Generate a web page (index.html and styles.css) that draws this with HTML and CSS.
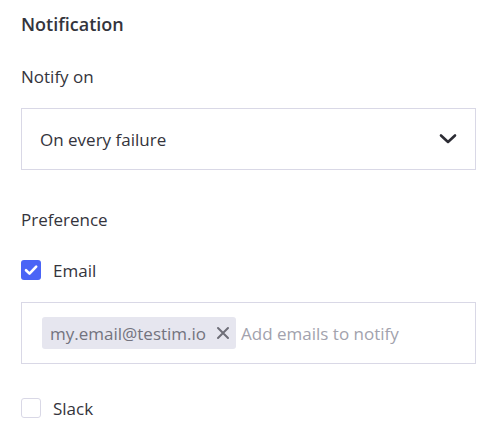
FILE: index.html
```html
<!DOCTYPE html>
<html>
<head>
<meta charset="utf-8">
<link rel="stylesheet" href="styles.css">
</head>
<body>
<div class="panel">
  <div class="title">Notification</div>
  <div class="label notify-label">Notify on</div>
  <div class="select">
    <span class="select-value">On every failure</span>
    <svg class="chevron" width="18" height="12" viewBox="0 0 18 12"><path d="M2 2.5 L9 9 L16 2.5" fill="none" stroke="#2c2c34" stroke-width="2.6" stroke-linecap="round" stroke-linejoin="round"/></svg>
  </div>
  <div class="label pref-label">Preference</div>
  <div class="check-row email-row">
    <span class="box checked">
      <svg width="20" height="20" viewBox="0 0 20 20"><path d="M5 10.2 L8.5 13.6 L15.2 6.6" fill="none" stroke="#fff" stroke-width="2.6" stroke-linecap="round" stroke-linejoin="round"/></svg>
    </span>
    <span class="check-label">Email</span>
  </div>
  <div class="emails">
    <span class="chip">my.email@testim.io
      <svg class="chip-x" width="14" height="14" viewBox="0 0 14 14"><path d="M2 2 L12 12 M12 2 L2 12" stroke="#6e6e78" stroke-width="2" stroke-linecap="round"/></svg>
    </span>
    <span class="placeholder">Add emails to notify</span>
  </div>
  <div class="check-row slack-row">
    <span class="box"></span>
    <span class="check-label">Slack</span>
  </div>
</div>
</body>
</html>
```
FILE: styles.css
```css
html, body {
  margin: 0;
  padding: 0;
  background: #ffffff;
}
body {
  font-family: "Open Sans", "Noto Sans", sans-serif;
  color: #34343c;
}
.panel {
  display: flex;
  flex-direction: column;
  width: 455px;
  padding: 12px 0 0 21px;
}
.title {
  font-size: 18px;
  font-weight: 600;
  line-height: 24px;
  padding-left: 0;
}
.label {
  font-size: 17px;
  line-height: 24px;
  padding-left: 0;
}
.notify-label { margin-top: 29px; }
.select {
  margin-top: 19px;
  height: 60px;
  border: 1px solid #d9d8e6;
  display: flex;
  align-items: center;
  justify-content: space-between;
  padding: 0 18px 0 18px;
  font-size: 17px;
}
.chevron { display: block; }
.pref-label { margin-top: 38px; }
.check-row {
  display: flex;
  align-items: center;
  gap: 12px;
  height: 20px;
  font-size: 17px;
}
.email-row { margin-top: 28px; }
.slack-row { margin-top: 34px; }
.box {
  width: 18px;
  height: 18px;
  border: 1px solid #d9d8e6;
  border-radius: 3px;
  display: flex;
  align-items: center;
  justify-content: center;
  background: #fff;
}
.box.checked {
  width: 20px;
  height: 20px;
  border: none;
  background: #4a64f6;
}
.box svg { display: block; }
.emails {
  margin-top: 22px;
  height: 60px;
  border: 1px solid #d9d8e6;
  display: flex;
  align-items: center;
  padding: 0 20px;
  gap: 5px;
  font-size: 17px;
}
.chip {
  display: flex;
  align-items: center;
  gap: 10px;
  height: 32px;
  padding: 0 6px 0 8px;
  background: #e6e6ef;
  border-radius: 3px;
  color: #73737e;
}
.chip-x { display: block; }
.placeholder {
  color: #a2a2ad;
}
```
